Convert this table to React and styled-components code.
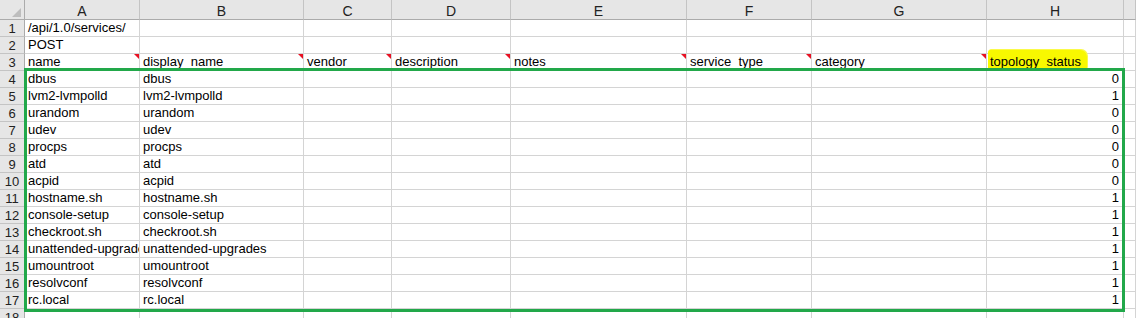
import React from 'react'
import styled, { createGlobalStyle } from 'styled-components'

const GlobalStyle = createGlobalStyle`
  html, body {
    margin: 0;
    padding: 0;
    background: #fff;
    overflow: hidden;
  }
  body {
    font-family: "Liberation Sans", Arial, sans-serif;
  }
`

const COLUMNS = ['A', 'B', 'C', 'D', 'E', 'F', 'G', 'H', '']
const WIDTHS = '25px 115px 164px 88px 119px 176px 125px 175px 137px 1fr'

const FIELDS = ['name', 'display_name', 'vendor', 'description', 'notes', 'service_type', 'category', 'topology_status']

const SERVICES = [
  ['dbus', 0],
  ['lvm2-lvmpolld', 1],
  ['urandom', 0],
  ['udev', 0],
  ['procps', 0],
  ['atd', 0],
  ['acpid', 0],
  ['hostname.sh', 1],
  ['console-setup', 1],
  ['checkroot.sh', 1],
  ['unattended-upgrades', 1],
  ['umountroot', 1],
  ['resolvconf', 1],
  ['rc.local', 1],
]

const Sheet = styled.div`
  display: grid;
  grid-template-columns: ${WIDTHS};
  grid-template-rows: 20px repeat(18, 17px);
  width: 1136px;
  height: 318px;
  overflow: hidden;
  font-size: 13px;
  color: #000;
`

// every cell sits at its own row/column so the selection frame can overlap them
const placed = p => `
  grid-row: ${p.$r + 1};
  grid-column: ${p.$c + 1};
`

const Corner = styled.div`
  position: relative;
  grid-row: 1;
  grid-column: 1;
  background: #e6e6e6;
  border-right: 1px solid #ababab;
  border-bottom: 1px solid #ababab;

  &::after {
    content: '';
    position: absolute;
    right: 3px;
    bottom: 2px;
    width: 0;
    height: 0;
    border-left: 9px solid transparent;
    border-bottom: 9px solid #bdbdbd;
  }
`

const ColHead = styled.div`
  ${placed}
  display: flex;
  align-items: center;
  justify-content: center;
  padding-top: 2px;
  background: #e6e6e6;
  border-right: 1px solid #c4c4c4;
  border-bottom: 1px solid #ababab;
  font-size: 14px;
  color: #222;
`

const RowHead = styled.div`
  ${placed}
  display: flex;
  align-items: center;
  justify-content: center;
  background: #e6e6e6;
  border-right: 1px solid #ababab;
  border-bottom: 1px solid #c4c4c4;
  font-size: 13px;
  color: #222;
`

const Cell = styled.div`
  ${placed}
  position: relative;
  display: flex;
  align-items: flex-end;
  justify-content: ${p => (p.$right ? 'flex-end' : 'flex-start')};
  padding: 0 ${p => (p.$right ? '4px' : '0')} 0 ${p => (p.$right ? '0' : '3px')};
  border-right: 1px solid #d4d4d4;
  border-bottom: 1px solid #d4d4d4;
  white-space: nowrap;
  overflow: ${p => (p.$spill ? 'visible' : 'hidden')};
  line-height: 16px;
  z-index: ${p => (p.$spill ? 1 : 0)};

  ${p =>
    p.$comment &&
    `
    &::after {
      content: '';
      position: absolute;
      top: 0;
      right: 0;
      width: 0;
      height: 0;
      border-left: 5px solid transparent;
      border-top: 5px solid #e81123;
      z-index: 2;
    }
  `}
`

const Highlight = styled.span`
  display: inline-block;
  margin-left: -2px;
  padding: 4px 6px 1px 2px;
  margin-bottom: -1px;
  background: #f8f800;
  border-radius: 2px 7px 4px 3px;
  box-shadow: 1px -1px 0 #fafa4a;
`

const Selection = styled.div`
  grid-column: 2 / 10;
  grid-row: 5 / 19;
  margin: -3px -1px -3px -1px;
  border: 3px solid #22a84a;
  pointer-events: none;
  z-index: 3;
`

function HeaderRow() {
  return (
    <>
      <Corner />
      {COLUMNS.map((c, i) => (
        <ColHead key={i} $r={0} $c={i + 1}>
          {c}
        </ColHead>
      ))}
    </>
  )
}

function Row({ n, values, rightFrom = 99, comments = false, spill = [] }) {
  return (
    <>
      <RowHead $r={n} $c={0}>
        {n}
      </RowHead>
      {COLUMNS.map((_, i) => (
        <Cell
          key={i}
          $r={n}
          $c={i + 1}
          $right={i >= rightFrom}
          $comment={comments && i < 7}
          $spill={spill.includes(i)}
        >
          {values[i]}
        </Cell>
      ))}
    </>
  )
}

export default function App() {
  const fieldCells = FIELDS.map(f =>
    f === 'topology_status' ? <Highlight key={f}>topology_status</Highlight> : f,
  )

  return (
    <>
      <GlobalStyle />
      <Sheet>
        <HeaderRow />
        <Row n={1} values={['/api/1.0/services/']} />
        <Row n={2} values={['POST']} />
        <Row n={3} values={fieldCells} comments spill={[7]} />
        {SERVICES.map(([name, status], i) => (
          <Row key={name} n={i + 4} values={[name, name, '', '', '', '', '', status]} rightFrom={7} />
        ))}
        <Row n={18} values={[]} />
        <Selection />
      </Sheet>
    </>
  )
}
